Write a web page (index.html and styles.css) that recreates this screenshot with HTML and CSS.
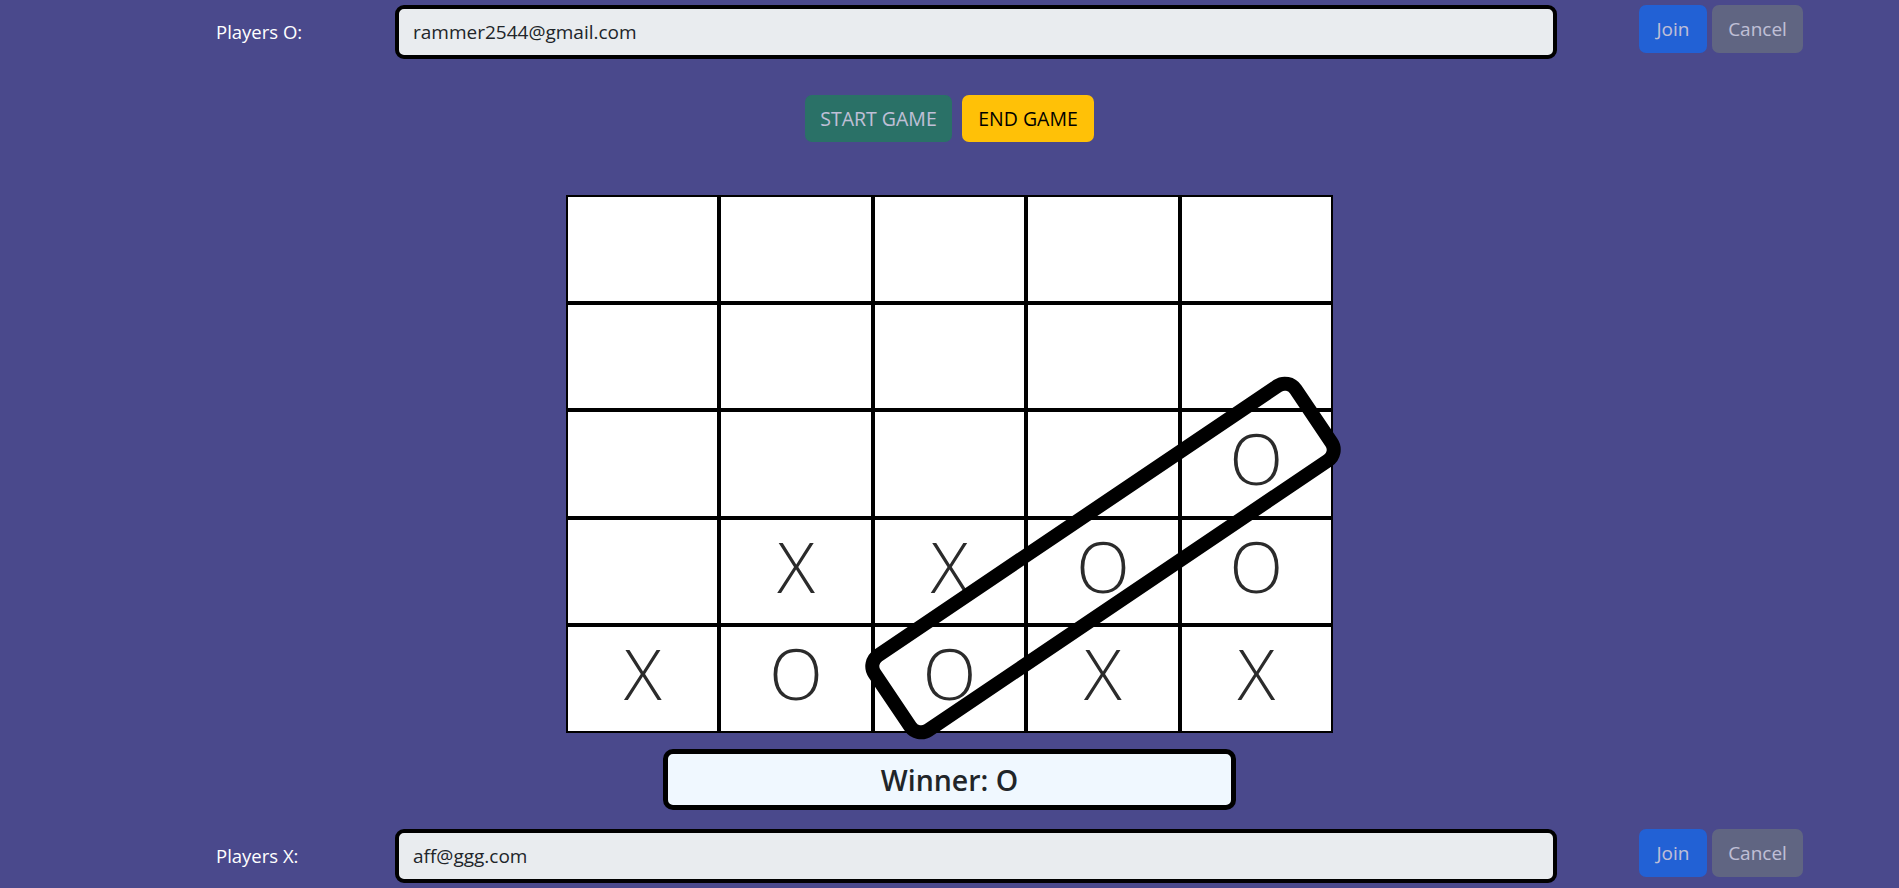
FILE: index.html
```html
<!DOCTYPE html>
<html lang="en">
<head>
<meta charset="utf-8">
<title>Tic Tac Toe</title>
<link rel="stylesheet" href="styles.css">
</head>
<body>
<div class="page">
  <div class="player-row top">
    <label class="player-label">Players O:</label>
    <input class="player-input" type="text" value="rammer2544@gmail.com" disabled>
    <div class="player-actions">
      <button class="btn btn-primary" disabled>Join</button>
      <button class="btn btn-secondary" disabled>Cancel</button>
    </div>
  </div>

  <div class="game-actions">
    <button class="btn btn-success" disabled>START GAME</button>
    <button class="btn btn-warning">END GAME</button>
  </div>

  <div class="board-wrap">
    <div class="board">
      <div class="cell"></div><div class="cell"></div><div class="cell"></div><div class="cell"></div><div class="cell"></div>
      <div class="cell"></div><div class="cell"></div><div class="cell"></div><div class="cell"></div><div class="cell"></div>
      <div class="cell"></div><div class="cell"></div><div class="cell"></div><div class="cell"></div><div class="cell">O</div>
      <div class="cell"></div><div class="cell">X</div><div class="cell">X</div><div class="cell">O</div><div class="cell">O</div>
      <div class="cell">X</div><div class="cell">O</div><div class="cell">O</div><div class="cell">X</div><div class="cell">X</div>
    </div>
    <div class="win-line"></div>
  </div>

  <div class="winner-row">
    <div class="winner">Winner: O</div>
  </div>

  <div class="player-row bottom">
    <label class="player-label">Players X:</label>
    <input class="player-input" type="text" value="aff@ggg.com" disabled>
    <div class="player-actions">
      <button class="btn btn-primary" disabled>Join</button>
      <button class="btn btn-secondary" disabled>Cancel</button>
    </div>
  </div>
</div>
</body>
</html>
```

FILE: styles.css
```css
html, body {
  margin: 0;
  padding: 0;
  height: 100%;
  overflow: hidden;
}

body {
  background: #4a498c;
  font-family: "Open Sans", "Noto Sans", "Liberation Sans", sans-serif;
  color: #212529;
}

.page {
  display: flex;
  flex-direction: column;
  padding-top: 5px;
}

.player-row {
  display: flex;
  align-items: flex-start;
  height: 54px;
}

.player-row.bottom {
  margin-top: 19px;
}

.player-label {
  width: 179px;
  padding-left: 216px;
  height: 54px;
  line-height: 54px;
  font-size: 18.5px;
  color: #ffffff;
  box-sizing: content-box;
}

.player-input {
  width: 1162px;
  height: 54px;
  box-sizing: border-box;
  border: 4px solid #000;
  border-radius: 9px;
  background: #e9ecef;
  color: #212529;
  font-family: inherit;
  font-size: 19px;
  padding: 0 14px;
  margin: 0;
  opacity: 1;
  -webkit-text-fill-color: #212529;
}

.player-actions {
  display: flex;
  gap: 5px;
  margin-left: 82px;
}

.btn {
  height: 48px;
  box-sizing: border-box;
  border: 1px solid transparent;
  border-radius: 7px;
  font-family: inherit;
  font-size: 19px;
  padding: 0;
  color: #fff;
  cursor: pointer;
}

.btn:disabled {
  opacity: 0.65;
}

.btn-primary {
  background: #0d6efd;
  width: 68px;
}

.btn-secondary {
  background: #6c757d;
  width: 91px;
}

.btn-success {
  background: #198754;
  width: 147px;
  height: 47px;
  font-size: 19.5px;
}

.btn-warning {
  background: #ffc107;
  color: #000;
  width: 132px;
  height: 47px;
  font-size: 19.5px;
}

.game-actions {
  display: flex;
  justify-content: center;
  gap: 10px;
  margin-top: 36px;
}

.board-wrap {
  position: relative;
  width: 767px;
  height: 538px;
  margin: 53px auto 0;
}

.board {
  display: grid;
  grid-template-columns: repeat(5, minmax(0, 1fr));
  grid-template-rows: repeat(5, minmax(0, 1fr));
  width: 767px;
  height: 538px;
}

.cell {
  background: #fff;
  border: 2px solid #000;
  display: flex;
  align-items: center;
  justify-content: center;
  font-size: 70px;
  line-height: 1;
  font-weight: 300;
  color: #2b2b2b;
  padding-bottom: 12px;
  box-sizing: border-box;
  min-height: 0;
  overflow: hidden;
}

.win-line {
  position: absolute;
  left: 276px;
  top: 311px;
  width: 522px;
  height: 104px;
  box-sizing: border-box;
  border: 14px solid #000;
  border-radius: 20px;
  transform: rotate(-34deg);
  pointer-events: none;
}

.winner-row {
  display: flex;
  justify-content: center;
  margin-top: 16px;
}

.winner {
  width: 573px;
  height: 61px;
  box-sizing: border-box;
  border: 5px solid #000;
  border-radius: 10px;
  background: #f0f8ff;
  display: flex;
  align-items: center;
  justify-content: center;
  font-size: 28.5px;
  font-weight: 600;
  color: #212529;
}
```
